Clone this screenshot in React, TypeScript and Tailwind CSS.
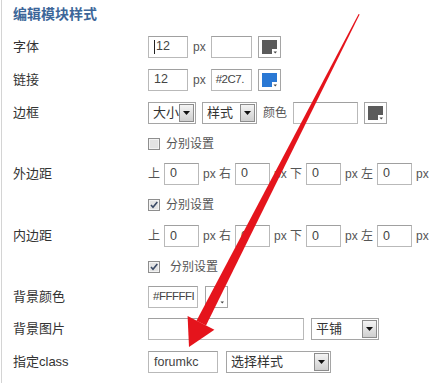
import React from "react";

type Children = { children?: React.ReactNode };

const Box = ({
  w,
  text,
  caret,
  tight,
}: {
  w: string;
  text?: string;
  caret?: boolean;
  tight?: boolean;
}) => (
  <div
    className={`${w} flex h-[22px] shrink-0 items-center overflow-hidden whitespace-nowrap border border-[#b9b9b9] border-t-[#a0a0a0] bg-white text-[#444] ${
      tight ? "pl-[4px] text-[11.5px] tracking-[-0.5px]" : "pl-[5px] text-[12.5px]"
    }`}
  >
    {caret && <span className="mr-[1px] inline-block h-[14px] w-[1px] bg-[#222]" />}
    {text}
  </div>
);

const Select = ({ w, text }: { w: string; text: string }) => (
  <div
    className={`${w} flex h-[22px] shrink-0 items-center justify-between border border-[#a5a5a5] bg-white pl-[4px] pr-[1px] text-[13px] text-[#333]`}
  >
    <span>{text}</span>
    <span className="flex h-[18px] w-[15px] items-center justify-center border border-[#8c8c8c] bg-gradient-to-b from-[#f4f4f4] to-[#cfcfcf]">
      <svg width="7" height="4" viewBox="0 0 7 4">
        <path d="M0 0h7L3.5 4z" fill="#111" />
      </svg>
    </span>
  </div>
);

const Swatch = ({ color }: { color: string }) => (
  <div className="h-[22px] w-[23px] shrink-0 border border-[#a5a5a5] bg-white">
    <svg width="21" height="20" viewBox="0 0 21 20">
      <path d="M3 3H18V12H13V17H3Z" fill={color} />
      <path d="M14.5 14.5H18L16.25 16.5Z" fill="#444" />
    </svg>
  </div>
);

const Check = ({ checked }: { checked?: boolean }) => (
  <svg width="12" height="12" viewBox="0 0 12 12" className="shrink-0">
    <rect x="0.5" y="0.5" width="11" height="11" fill="#f3f3f3" stroke="#8e8e8e" />
    <rect x="2" y="2" width="8" height="8" fill="#e4e4e4" />
    {checked && <path d="M3 6l2 2.3L9.3 3" fill="none" stroke="#3a4a66" strokeWidth="1.6" />}
  </svg>
);

const Row = ({ label, h, children }: { label?: string; h: string } & Children) => (
  <div className={`flex items-center ${h}`}>
    <div className="w-[135px] shrink-0 text-[13px] text-[#333]">{label}</div>
    <div className="flex items-center">{children}</div>
  </div>
);

const Txt = ({ children }: Children) => (
  <span className="shrink-0 whitespace-nowrap text-[12px] text-[#555]">{children}</span>
);

const Sides = () => (
  <div className="flex items-center gap-[4px]">
    <Txt>上</Txt>
    <Box w="w-[35px]" text="0" />
    <Txt>px 右</Txt>
    <Box w="w-[35px]" text="0" />
    <Txt>px 下</Txt>
    <Box w="w-[35px]" text="0" />
    <Txt>px 左</Txt>
    <Box w="w-[35px]" text="0" />
    <Txt>px</Txt>
  </div>
);

export default function App() {
  return (
    <div className="relative h-[383px] w-[434px] overflow-hidden bg-white font-['Liberation_Sans','Noto_Sans_CJK_SC',sans-serif]">
      <div className="ml-[1px] h-full border-l border-[#d4d4d4] pl-[11px]">
        <div className="flex h-[30px] items-center pb-[2px] text-[14px] font-bold text-[#3c6699]">
          编辑模块样式
        </div>

        <Row label="字体" h="h-[33px]">
          <div className="flex items-center gap-[5px]">
            <Box w="w-[40px]" text="12" caret />
            <Txt>px</Txt>
            <Box w="w-[41px]" />
            <span className="ml-[1px]">
              <Swatch color="#5b5b5b" />
            </span>
          </div>
        </Row>

        <Row label="链接" h="h-[33px]">
          <div className="flex items-center gap-[5px]">
            <Box w="w-[40px]" text="12" />
            <Txt>px</Txt>
            <Box w="w-[41px]" text="#2C7." tight />
            <span className="ml-[1px]">
              <Swatch color="#2a78d4" />
            </span>
          </div>
        </Row>

        <Row label="边框" h="h-[34px]">
          <div className="flex items-center gap-[6px]">
            <Select w="w-[48px]" text="大小" />
            <Select w="w-[55px]" text="样式" />
            <Txt>颜色</Txt>
            <Box w="w-[65px]" />
            <Swatch color="#5b5b5b" />
          </div>
        </Row>

        <Row h="h-[27px]">
          <div className="flex items-center gap-[6px]">
            <Check />
            <Txt>分别设置</Txt>
          </div>
        </Row>

        <Row label="外边距" h="h-[33px]">
          <Sides />
        </Row>

        <Row h="h-[30px]">
          <div className="flex items-center gap-[6px]">
            <Check checked />
            <Txt>分别设置</Txt>
          </div>
        </Row>

        <Row label="内边距" h="h-[32px]">
          <Sides />
        </Row>

        <Row h="h-[30px]">
          <div className="flex items-center gap-[10px]">
            <Check checked />
            <Txt>分别设置</Txt>
          </div>
        </Row>

        <Row label="背景颜色" h="h-[29px]">
          <div className="flex items-center gap-[7px]">
            <Box w="w-[50px]" text="#FFFFFI" tight />
            <Swatch color="#ffffff" />
          </div>
        </Row>

        <Row label="背景图片" h="h-[36px]">
          <div className="flex items-center gap-[7px]">
            <Box w="w-[156px]" />
            <Select w="w-[68px]" text="平铺" />
          </div>
        </Row>

        <Row label="指定class" h="h-[30px]">
          <div className="flex items-center gap-[8px]">
            <Box w="w-[70px]" text="forumkc" />
            <Select w="w-[105px]" text="选择样式" />
          </div>
        </Row>
      </div>

      <svg
        className="pointer-events-none absolute left-0 top-0"
        width="434"
        height="383"
        viewBox="0 0 434 383"
      >
        <path d="M358.6 14 L359.6 14.5 L206 325.5 L196.5 320.7 Z" fill="#e5141c" />
        <path d="M189 347 L187.6 316 L214.4 329.8 Z" fill="#e5141c" />
      </svg>
    </div>
  );
}
